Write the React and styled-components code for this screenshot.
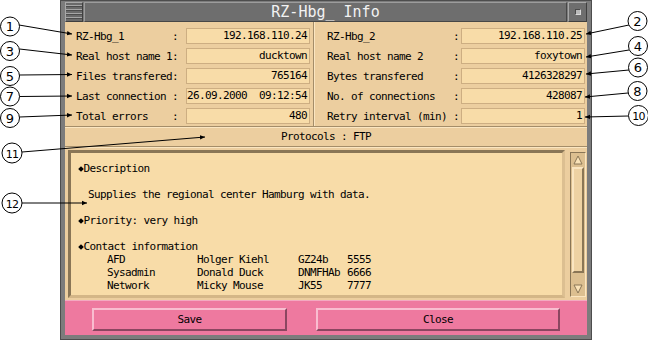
import React from 'react';
import styled, { createGlobalStyle } from 'styled-components';

const mono = `"DejaVu Sans Mono", "Liberation Mono", monospace`;

const colors = {
  panel: '#ecce9f',
  field: '#f8dca8',
  fieldEdge: '#cdae82',
  shadow: '#8a7656',
  light: '#fbe6c1',
  trough: '#dcbf90',
  pink: '#ee799f',
  pinkLight: '#f9bdd0',
  pinkDark: '#8b4660',
};

const GlobalStyle = createGlobalStyle`
  html, body {
    margin: 0;
    padding: 0;
    background: #ffffff;
  }
  body {
    font-family: ${mono};
    color: #000;
  }
`;

const Page = styled.div`
  position: relative;
  width: 648px;
  height: 340px;
  overflow: hidden;
`;

const Window = styled.div`
  margin-left: 60px;
  width: 532px;
  height: 340px;
  box-sizing: border-box;
  background: #7c7c7c;
  border: 1px solid #4d4d4d;
  padding: 1px 4px 4px 4px;
  display: flex;
  flex-direction: column;
`;

const TitleBar = styled.div`
  display: flex;
  height: 20px;
`;

const MenuButton = styled.div`
  width: 18px;
  box-sizing: border-box;
  border: 1px solid;
  border-color: #a8a8a8 #3f3f3f #3f3f3f #a8a8a8;
  background: repeating-linear-gradient(
    to bottom,
    #6a6a6a 0px,
    #6a6a6a 2px,
    #a6a6a6 2px,
    #a6a6a6 3px,
    #4c4c4c 3px,
    #4c4c4c 4px
  );
  margin-right: 1px;
`;

const TitleText = styled.div`
  flex: 1;
  box-sizing: border-box;
  border: 1px solid;
  border-color: #9c9c9c #474747 #474747 #9c9c9c;
  background: #6e6e6e;
  color: #f2f2f2;
  font-family: ${mono};
  font-size: 15px;
  line-height: 18px;
  text-align: center;
  white-space: pre;
`;

const MaxButton = styled.div`
  width: 19px;
  margin-left: 1px;
  box-sizing: border-box;
  border: 1px solid;
  border-color: #a8a8a8 #3f3f3f #3f3f3f #a8a8a8;
  background: #6e6e6e;
  display: flex;
  align-items: center;
  justify-content: center;

  &::after {
    content: '';
    width: 4px;
    height: 4px;
    background: #b9b9b9;
    border: 1px solid;
    border-color: #4a4a4a #dadada #dadada #4a4a4a;
  }
`;

const Content = styled.div`
  flex: 1;
  display: flex;
  flex-direction: column;
  background: ${colors.panel};
`;

const InfoGrid = styled.div`
  display: flex;
  height: 104px;
`;

const InfoColumn = styled.div`
  width: ${p => p.$width}px;
  box-sizing: border-box;
  padding: 4px 0 0 ${p => p.$padLeft}px;
`;

const VDivider = styled.div`
  width: 0;
  border-left: 1px solid #a48d69;
  border-right: 1px solid ${colors.light};
`;

const InfoRow = styled.div`
  display: grid;
  grid-template-columns: ${p => p.$label}px ${p => p.$colon}px 124px;
  align-items: center;
  height: 20px;
  font-size: 11px;
  letter-spacing: -0.62px;
  white-space: pre;
`;

const Colon = styled.span`
  text-align: left;
`;

const Field = styled.div`
  height: 16px;
  box-sizing: border-box;
  background: ${colors.field};
  border: 1px solid ${colors.fieldEdge};
  line-height: 14px;
  text-align: right;
  padding-right: 2px;
  overflow: hidden;
`;

const HLine = styled.div`
  height: 0;
  border-top: 1px solid #a48d69;
  border-bottom: 1px solid ${colors.light};
`;

const ProtocolBar = styled.div`
  height: 18px;
  line-height: 18px;
  text-align: center;
  font-size: 11px;
  letter-spacing: -0.62px;
  white-space: pre;
`;

const TextSection = styled.div`
  height: 152px;
  box-sizing: border-box;
  display: flex;
  gap: 5px;
  padding: 2px 1px 2px 3px;
`;

const TextArea = styled.div`
  width: 497px;
  box-sizing: border-box;
  border: 3px solid;
  border-color: ${colors.shadow} #dcbf91 #d4b687 ${colors.shadow};
  background: ${colors.field};
  padding: 9px 0 0 7px;
  font-size: 11px;
  letter-spacing: -0.62px;
  line-height: 13px;
  white-space: pre;
  overflow: hidden;
`;

const Line = styled.div`
  height: 13px;
  padding-left: ${p => p.$indent || 0}px;
`;

const Bullet = styled.span`
  display: inline-block;
  width: 4px;
  height: 4px;
  background: #000;
  transform: rotate(45deg);
  margin: 0 1px 1px 0.5px;
  vertical-align: middle;
`;

const ContactRow = styled.div`
  display: grid;
  grid-template-columns: 90px 101px 49px auto;
  height: 13px;
  padding-left: 29px;
`;

const Scrollbar = styled.div`
  width: 16px;
  margin-top: 2px;
  margin-bottom: 1px;
  box-sizing: border-box;
  border: 1px solid;
  border-color: ${colors.shadow} ${colors.light} ${colors.light} ${colors.shadow};
  background: ${colors.trough};
  display: flex;
  flex-direction: column;
  padding: 1px;
`;

const ArrowButton = styled.div`
  height: 12px;
  display: flex;
  align-items: center;
  justify-content: center;
`;

const Thumb = styled.div`
  height: 106px;
  margin: 1px 0;
  box-sizing: border-box;
  border: 2px solid;
  border-color: ${colors.light} ${colors.shadow} ${colors.shadow} ${colors.light};
  background: #eed2a3;
`;

const Spacer = styled.div`
  flex: 1;
`;

const ButtonBar = styled.div`
  flex: 1;
  background: ${colors.pink};
  border-top: 1px solid #f4a9c1;
  display: flex;
  gap: 29px;
  padding: 7px 0 0 27px;
`;

const Button = styled.div`
  width: ${p => p.$width}px;
  height: 23px;
  box-sizing: border-box;
  border: 2px solid;
  border-color: ${colors.pinkLight} ${colors.pinkDark} ${colors.pinkDark} ${colors.pinkLight};
  display: flex;
  align-items: center;
  justify-content: center;
  font-size: 11px;
  letter-spacing: -0.62px;
`;

const Overlay = styled.svg`
  position: absolute;
  left: 0;
  top: 0;
  width: 648px;
  height: 340px;
  pointer-events: none;
`;

const leftRows = [
  ['RZ-Hbg_1', '192.168.110.24'],
  ['Real host name 1', 'ducktown'],
  ['Files transfered', '765164'],
  ['Last connection ', '26.09.2000  09:12:54'],
  ['Total errors', '480'],
];

const rightRows = [
  ['RZ-Hbg_2', '192.168.110.25'],
  ['Real host name 2', 'foxytown'],
  ['Bytes transfered', '4126328297'],
  ['No. of connections', '428087'],
  ['Retry interval (min)', '1'],
];

const contacts = [
  ['AFD', 'Holger Kiehl', 'GZ24b', '5555'],
  ['Sysadmin', 'Donald Duck', 'DNMFHAb', '6666'],
  ['Network', 'Micky Mouse', 'JK55', '7777'],
];

const callouts = [
  { n: 1, cx: 10, cy: 26.5, r: 9.5, x1: 19, y1: 25, x2: 72, y2: 34 },
  { n: 3, cx: 10, cy: 51, r: 9.5, x1: 19.5, y1: 49, x2: 72, y2: 55 },
  { n: 5, cx: 10, cy: 76, r: 9.5, x1: 19.5, y1: 75, x2: 72, y2: 74.5 },
  { n: 7, cx: 10, cy: 96.5, r: 9.5, x1: 19.5, y1: 96.5, x2: 72, y2: 96 },
  { n: 9, cx: 10, cy: 118, r: 9.5, x1: 19.5, y1: 117, x2: 72, y2: 115 },
  { n: 11, cx: 12, cy: 153, r: 10, x1: 22, y1: 152, x2: 205, y2: 137 },
  { n: 12, cx: 12, cy: 203, r: 10, x1: 22, y1: 203, x2: 87, y2: 203 },
  { n: 2, cx: 637.5, cy: 21, r: 9.5, x1: 629, y1: 25, x2: 586, y2: 34 },
  { n: 4, cx: 638, cy: 46, r: 9.5, x1: 629, y1: 50, x2: 586, y2: 57 },
  { n: 6, cx: 638, cy: 67.5, r: 9.5, x1: 629, y1: 70, x2: 586, y2: 74 },
  { n: 8, cx: 637.5, cy: 91, r: 9.5, x1: 628, y1: 93, x2: 585, y2: 97 },
  { n: 10, cx: 638.5, cy: 115.5, r: 10, x1: 628.5, y1: 116, x2: 585, y2: 117 },
];

const Triangle = ({ up }) => (
  <svg width="10" height="10" viewBox="0 0 10 10">
    {up ? (
      <polygon points="5,1 9,9 1,9" fill="#fae3b8" stroke={colors.shadow} strokeWidth="1" />
    ) : (
      <polygon points="1,1 9,1 5,9" fill="#fae3b8" stroke={colors.shadow} strokeWidth="1" />
    )}
  </svg>
);

const Row = ({ label, value, labelWidth, colonWidth }) => (
  <InfoRow $label={labelWidth} $colon={colonWidth}>
    <span>{label}</span>
    <Colon>:</Colon>
    <Field>{value}</Field>
  </InfoRow>
);

const Callouts = () => (
  <Overlay viewBox="0 0 648 340">
    <defs>
      <marker id="tip" markerWidth="6" markerHeight="6" refX="5" refY="3" orient="auto" markerUnits="userSpaceOnUse">
        <path d="M0,0.8 L5,3 L0,5.2 z" fill="#000" />
      </marker>
    </defs>
    {callouts.map(c => (
      <g key={c.n}>
        <line x1={c.x1} y1={c.y1} x2={c.x2} y2={c.y2} stroke="#000" strokeWidth="1" markerEnd="url(#tip)" />
        <circle cx={c.cx} cy={c.cy} r={c.r} fill="#fff" stroke="#000" strokeWidth="1" />
        <text
          x={c.cx}
          y={c.cy + 4.5}
          textAnchor="middle"
          fontFamily='"DejaVu Sans", sans-serif'
          fontSize={c.n > 9 ? 11 : 13}
          letterSpacing={c.n > 9 ? -0.8 : 0}
        >
          {c.n}
        </text>
      </g>
    ))}
  </Overlay>
);

export default function App() {
  return (
    <Page>
      <GlobalStyle />
      <Window>
        <TitleBar>
          <MenuButton />
          <TitleText>RZ-Hbg_ Info</TitleText>
          <MaxButton />
        </TitleBar>
        <Content>
          <InfoGrid>
            <InfoColumn $width={248} $padLeft={11}>
              {leftRows.map(([l, v]) => (
                <Row key={l} label={l} value={v} labelWidth={96} colonWidth={14} />
              ))}
            </InfoColumn>
            <VDivider />
            <InfoColumn $width={272} $padLeft={12}>
              {rightRows.map(([l, v]) => (
                <Row key={l} label={l} value={v} labelWidth={126} colonWidth={8} />
              ))}
            </InfoColumn>
          </InfoGrid>
          <HLine />
          <ProtocolBar>Protocols : FTP</ProtocolBar>
          <HLine />
          <TextSection>
            <TextArea>
              <Line><Bullet />Description</Line>
              <Line />
              <Line $indent={10}>Supplies the regional center Hamburg with data.</Line>
              <Line />
              <Line><Bullet />Priority: very high</Line>
              <Line />
              <Line><Bullet />Contact information</Line>
              {contacts.map(c => (
                <ContactRow key={c[0]}>
                  {c.map(cell => <span key={cell}>{cell}</span>)}
                </ContactRow>
              ))}
            </TextArea>
            <Scrollbar>
              <ArrowButton><Triangle up /></ArrowButton>
              <Thumb />
              <Spacer />
              <ArrowButton><Triangle /></ArrowButton>
            </Scrollbar>
          </TextSection>
          <ButtonBar>
            <Button $width={195}>Save</Button>
            <Button $width={244}>Close</Button>
          </ButtonBar>
        </Content>
      </Window>
      <Callouts />
    </Page>
  );
}
